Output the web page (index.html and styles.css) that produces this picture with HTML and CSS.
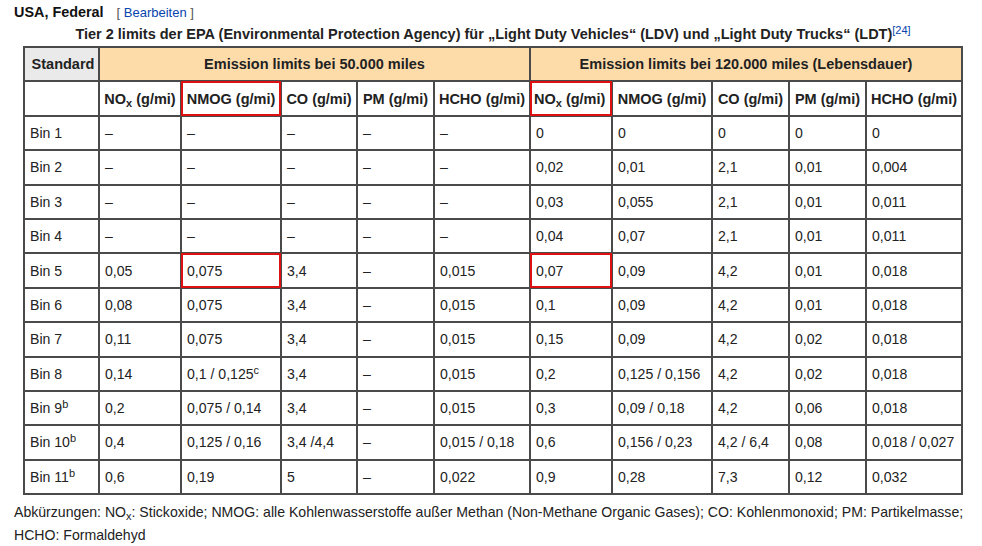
FILE: index.html
```html
<!DOCTYPE html>
<html lang="de">
<head>
<meta charset="utf-8">
<link rel="stylesheet" href="styles.css">
</head>
<body>
<div class="page">
  <div class="heading"><span class="h-title">USA, Federal</span><span class="edit">[ <a href="#">Bearbeiten</a> ]</span></div>
  <table class="wikitable">
    <caption>Tier 2 limits der EPA (Environmental Protection Agency) für „Light Duty Vehicles“ (LDV) und „Light Duty Trucks“ (LDT)<sup class="ref">[24]</sup></caption>
    <colgroup>
      <col class="c75"><col class="c82"><col class="c100"><col class="c76"><col class="c77"><col class="c96">
      <col class="c82"><col class="c100"><col class="c77"><col class="c77"><col class="c96">
    </colgroup>
    <tr class="hrow">
      <th class="std">Standard</th>
      <th class="grp" colspan="5">Emission limits bei 50.000 miles</th>
      <th class="grp" colspan="5">Emission limits bei 120.000 miles (Lebensdauer)</th>
    </tr>
    <tr class="hrow2">
      <th></th>
      <th>NO<sub>x</sub> (g/mi)</th>
      <th class="mark">NMOG (g/mi)</th>
      <th>CO (g/mi)</th>
      <th>PM (g/mi)</th>
      <th>HCHO (g/mi)</th>
      <th class="mark left">NO<sub>x</sub> (g/mi)</th>
      <th>NMOG (g/mi)</th>
      <th>CO (g/mi)</th>
      <th>PM (g/mi)</th>
      <th>HCHO (g/mi)</th>
    </tr>
    <tr><td>Bin 1</td><td>–</td><td>–</td><td>–</td><td>–</td><td>–</td><td>0</td><td>0</td><td>0</td><td>0</td><td>0</td></tr>
    <tr><td>Bin 2</td><td>–</td><td>–</td><td>–</td><td>–</td><td>–</td><td>0,02</td><td>0,01</td><td>2,1</td><td>0,01</td><td>0,004</td></tr>
    <tr><td>Bin 3</td><td>–</td><td>–</td><td>–</td><td>–</td><td>–</td><td>0,03</td><td>0,055</td><td>2,1</td><td>0,01</td><td>0,011</td></tr>
    <tr><td>Bin 4</td><td>–</td><td>–</td><td>–</td><td>–</td><td>–</td><td>0,04</td><td>0,07</td><td>2,1</td><td>0,01</td><td>0,011</td></tr>
    <tr><td>Bin 5</td><td>0,05</td><td class="mark">0,075</td><td>3,4</td><td>–</td><td>0,015</td><td class="mark">0,07</td><td>0,09</td><td>4,2</td><td>0,01</td><td>0,018</td></tr>
    <tr><td>Bin 6</td><td>0,08</td><td>0,075</td><td>3,4</td><td>–</td><td>0,015</td><td>0,1</td><td>0,09</td><td>4,2</td><td>0,01</td><td>0,018</td></tr>
    <tr><td>Bin 7</td><td>0,11</td><td>0,075</td><td>3,4</td><td>–</td><td>0,015</td><td>0,15</td><td>0,09</td><td>4,2</td><td>0,02</td><td>0,018</td></tr>
    <tr><td>Bin 8</td><td>0,14</td><td>0,1 / 0,125<sup>c</sup></td><td>3,4</td><td>–</td><td>0,015</td><td>0,2</td><td>0,125 / 0,156</td><td>4,2</td><td>0,02</td><td>0,018</td></tr>
    <tr><td>Bin 9<sup>b</sup></td><td>0,2</td><td>0,075 / 0,14</td><td>3,4</td><td>–</td><td>0,015</td><td>0,3</td><td>0,09 / 0,18</td><td>4,2</td><td>0,06</td><td>0,018</td></tr>
    <tr><td>Bin 10<sup>b</sup></td><td>0,4</td><td>0,125 / 0,16</td><td>3,4 /4,4</td><td>–</td><td>0,015 / 0,18</td><td>0,6</td><td>0,156 / 0,23</td><td>4,2 / 6,4</td><td>0,08</td><td>0,018 / 0,027</td></tr>
    <tr><td>Bin 11<sup>b</sup></td><td>0,6</td><td>0,19</td><td>5</td><td>–</td><td>0,022</td><td>0,9</td><td>0,28</td><td>7,3</td><td>0,12</td><td>0,032</td></tr>
  </table>
  <p class="note">Abkürzungen: NO<sub>x</sub>: Stickoxide; NMOG: alle Kohlenwasserstoffe außer Methan (Non-Methane Organic Gases); CO: Kohlenmonoxid; PM: Partikelmasse; HCHO: Formaldehyd</p>
</div>
</body>
</html>
```
FILE: styles.css
```css
html, body {
  margin: 0;
  padding: 0;
  background: #fff;
}
body {
  font-family: "Liberation Sans", Arial, sans-serif;
  font-size: 14.1px;
  color: #222;
}
.page {
  padding: 3px 0 0 14px;
  width: 950px;
}
.heading {
  height: 18px;
  line-height: 18px;
}
.h-title {
  font-weight: bold;
  color: #111;
  font-size: 14.4px;
}
.edit {
  margin-left: 13px;
  color: #555;
  font-size: 13px;
}
.edit a {
  color: #0645ad;
  text-decoration: none;
}
.wikitable {
  margin: 0 0 0 9px;
  border-collapse: collapse;
  table-layout: fixed;
  width: 940px;
  border: 2px solid #444;
}
caption {
  font-weight: bold;
  font-size: 14.5px;
  color: #222;
  height: 24px;
  line-height: 24px;
  padding-top: 1px;
  text-align: center;
  white-space: nowrap;
}
.ref {
  font-weight: normal;
  color: #0645ad;
  font-size: 11px;
  vertical-align: 5px;
  line-height: 0;
}
.c75 { width: 75px; }
.c76 { width: 76px; }
.c77 { width: 77px; }
.c82 { width: 82px; }
.c96 { width: 96px; }
.c100 { width: 100px; }
th, td {
  border: 2px solid #4a4a4a;
  padding: 0 5px;
  height: 30px;
  vertical-align: middle;
  white-space: nowrap;
  overflow: visible;
}
tr {
  height: 34.4px;
}
th {
  font-weight: bold;
  font-size: 14.5px;
  color: #222;
  text-align: center;
  padding: 0 3px;
}
.std {
  background: #eaeaea;
  padding-left: 6px;
}
.grp {
  background: #fedcaa;
}
td {
  text-align: left;
  color: #222;
}
.mark {
  outline: 2px solid #dd1111;
  outline-offset: -2px;
}
th.left {
  text-align: left;
  padding-left: 3px;
}
sub {
  font-size: 11px;
  vertical-align: -3px;
  line-height: 0;
}
sup {
  font-size: 11px;
  vertical-align: 5px;
  line-height: 0;
}
.note {
  margin: 6px 0 0 0;
  line-height: 23px;
  color: #222;
  width: 950px;
}
```
